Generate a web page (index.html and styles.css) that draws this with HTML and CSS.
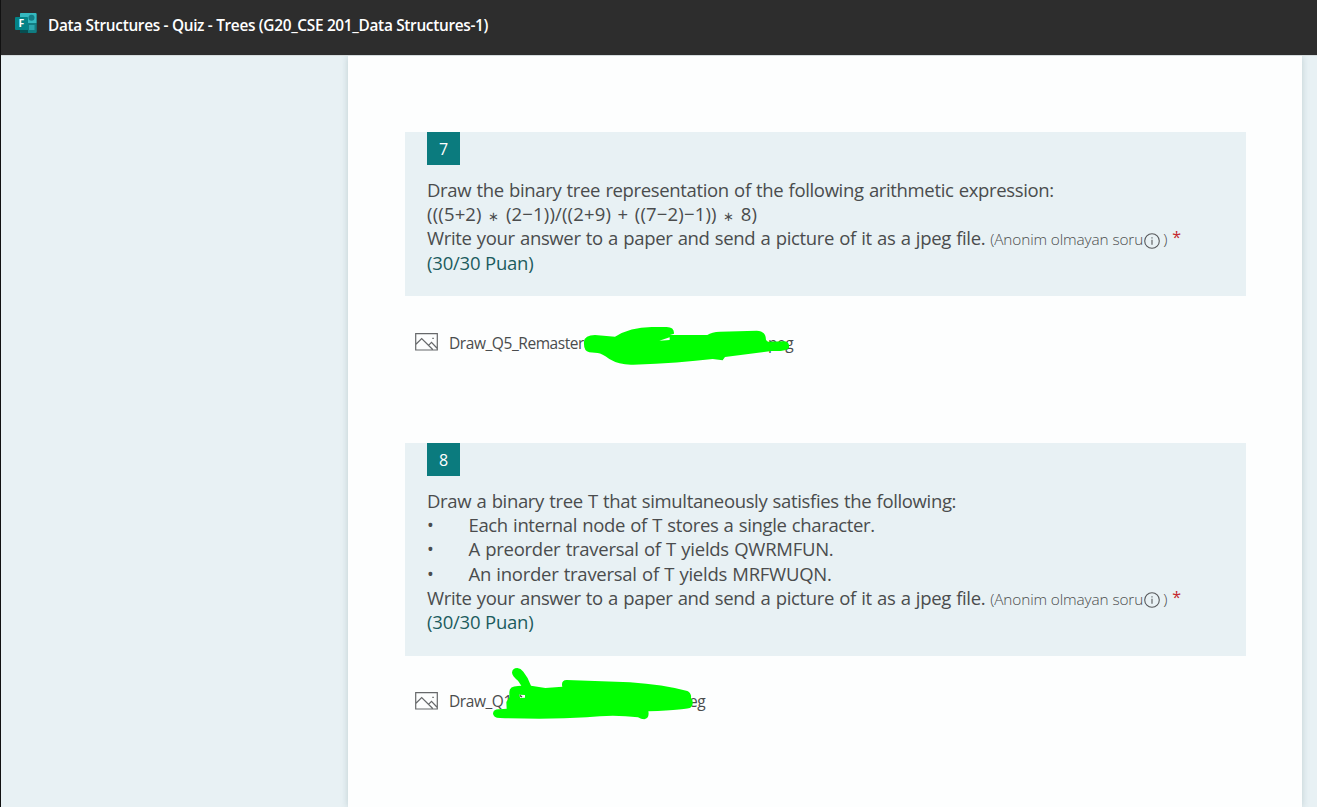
FILE: index.html
```html
<!DOCTYPE html>
<html lang="tr">
<head>
<meta charset="utf-8">
<title>Data Structures - Quiz - Trees</title>
<link rel="stylesheet" href="styles.css">
</head>
<body>
<header class="topbar">
  <svg class="logo" width="22" height="21" viewBox="0 0 22 21">
    <rect x="5" y="0" width="16.500" height="20" rx="1.200" fill="#0a7c80"/>
    <path d="M6 0h14.500q1 0 1 1v9h-16.500v-9q0-1 1-1z" fill="#35b9c0"/>
    <rect x="13" y="10" width="8.500" height="9.500" fill="#127c82"/>
    <circle cx="16.500" cy="4.800" r="3" fill="#137d86"/>
    <rect x="14" y="12" width="5.500" height="5" fill="#2ba5ad"/>
    <path d="M5 17h8v3h-7q-1 0-1-1z" fill="#064d50"/>
    <rect x="0" y="4" width="13" height="13" rx="1" fill="#038387"/>
    <text class="logo-letter" x="3.400" y="14">F</text>
  </svg>
  <h1 class="title">Data Structures - Quiz - Trees (G20_CSE 201_Data Structures-1)</h1>
</header>
<main class="page">
  <div class="card">
    <section class="question">
      <div class="number">7</div>
      <div class="line"><span class="intro">Draw the binary tree representation of the following arithmetic expression:</span></div>
      <div class="line"><span class="formula">(((5+2) <span class="ast">∗</span> (2−1))/((2+9) + ((7−2)−1)) <span class="ast">∗</span> 8)</span></div>
      <div class="line"><span class="intro">Write your answer to a paper and send a picture of it as a jpeg file.</span><span class="note">(Anonim olmayan soru</span><svg class="info" width="16" height="16" viewBox="0 0 16 16"><circle cx="8" cy="8" r="7.300"/><path d="M8 6.700v5M8 4.200v1.300"/></svg><span class="close">)</span><span class="req">*</span></div>
      <div class="line points">(30/30 Puan)</div>
    </section>
    <div class="file">
      <svg class="pic" width="23" height="18" viewBox="0 0 23 18"><path d="M.7.700h21.600v16.300H.7zM.7 11.500l6-6 11 11M13.500 12.300l3-3 5.800 6.200"/><path d="M17.300 5.300h1.500"/></svg>
      <span class="fname">Draw_Q5_Remaster</span><span class="tail t1">peg</span>
      <svg class="scribble s1" width="240" height="60" viewBox="0 0 720 180"><path d="M42 80Q44 60 75 60L135 65Q180 37 245 36H290Q313 36 312 56L300 60L412 60Q425 51 450 50L560 47Q588 48 588 75L594 80L645 79Q659 82 657 98Q650 110 605 108L465 126L458 136L428 132Q330 144 190 149Q150 151 118 132Q96 116 83 114L58 112Q40 108 42 80ZM268 77L299 75V67Z"/></svg>
    </div>
    <section class="question second">
      <div class="number">8</div>
      <div class="line"><span class="intro">Draw a binary tree T that simultaneously satisfies the following:</span></div>
      <div class="line"><span class="bullet">•</span><span class="item">Each internal node of T stores a single character.</span></div>
      <div class="line"><span class="bullet">•</span><span class="item caps">A preorder traversal of T yields QWRMFUN.</span></div>
      <div class="line"><span class="bullet">•</span><span class="item caps">An inorder traversal of T yields MRFWUQN.</span></div>
      <div class="line"><span class="intro">Write your answer to a paper and send a picture of it as a jpeg file.</span><span class="note">(Anonim olmayan soru</span><svg class="info" width="16" height="16" viewBox="0 0 16 16"><circle cx="8" cy="8" r="7.300"/><path d="M8 6.700v5M8 4.200v1.300"/></svg><span class="close">)</span><span class="req">*</span></div>
      <div class="line points">(30/30 Puan)</div>
    </section>
    <div class="file last">
      <svg class="pic" width="23" height="18" viewBox="0 0 23 18"><path d="M.7.700h21.600v16.300H.7zM.7 11.500l6-6 11 11M13.500 12.300l3-3 5.800 6.200"/><path d="M17.300 5.300h1.500"/></svg>
      <span class="fname">Draw_Q1</span><span class="tail t2">eg</span>
      <svg class="scribble s2" width="320" height="70" viewBox="0 0 960 210"><path d="M336 38Q337 24 352 24Q362 25 370 35Q385 53 393 77L436 84L487 80Q482 61 500 60L690 67Q790 74 862 93Q875 100 873 113Q884 128 873 142Q865 150 745 154Q749 174 733 178Q723 178 714 172Q640 162 560 172Q450 179 300 174Q279 174 279 160Q281 146 300 148L320 146L319 126L328 112L328 96Q328 78 354 78L364 77L354 62Q337 48 336 38ZM357 104L361 114L375 113V105Z"/><path class="mark" d="M359 106l7 5"/></svg>
    </div>
  </div>
</main>
</body>
</html>
```
FILE: styles.css
```css
* { box-sizing: border-box; }
body {
  margin: 0;
  height: 807px;
  overflow: hidden;
  display: flex;
  flex-direction: column;
  font-family: "Open Sans", "Noto Sans", sans-serif;
  color: #4a4c4d;
  background: #e8f1f4;
  border-left: 1px solid #111;
}
.topbar {
  height: 55px;
  flex: none;
  display: flex;
  align-items: flex-start;
  padding: 13px 0 0 14px;
  background: #2d2d2d;
}
.logo { flex: none; }
.logo-letter { font: 700 10.5px "Open Sans", sans-serif; fill: #fff; }
.title {
  margin: 1px 0 0 11px;
  font-size: 15.4px;
  line-height: 23px;
  font-weight: 600;
  letter-spacing: -0.32px;
  white-space: nowrap;
  color: #fff;
}
.page {
  flex: 1;
  display: flex;
  padding-left: 347px;
  border-top: 1px solid #d5dcde;
}
.card {
  width: 954px;
  padding: 76px 56px 0 57px;
  background: #fdfefe;
  box-shadow: 0 0 7px rgba(40, 80, 90, 0.22);
  clip-path: inset(0 -12px);
}
.question { height: 164px; width: 841px; padding-left: 22px; background: #e8f1f4; }
.second { height: 213px; margin-top: 78px; }
.number {
  width: 33px;
  height: 33px;
  margin-bottom: 12.8px;
  font-size: 16px;
  line-height: 35px;
  text-align: center;
  color: #fff;
  background: #0b7b7e;
}
.line {
  display: flex;
  height: 24.3px;
  line-height: 24.3px;
  font-size: 18.5px;
  white-space: nowrap;
}
.intro { letter-spacing: -0.35px; word-spacing: 0.8px; }
.formula { letter-spacing: 0.17px; word-spacing: 1.5px; }
.ast { font-size: 13px; line-height: 1; }
.item { letter-spacing: -0.36px; word-spacing: 0.8px; }
.caps { letter-spacing: -0.27px; }
.bullet { width: 41.5px; font-size: 18px; }
.note { margin-left: 5px; font-size: 15.4px; font-weight: 300; line-height: 27px; letter-spacing: -0.13px; }
.close { margin-left: 3px; font-size: 15.4px; font-weight: 300; line-height: 27px; }
.info { margin: 6.5px 0 0 1px; fill: none; stroke: #56585a; stroke-width: 1.1; }
.req { margin-left: 5px; font-size: 16px; line-height: 23px; color: #c4282d; }
.points { letter-spacing: -0.2px; color: #1c5c5e; }
.file {
  position: relative;
  display: flex;
  height: 69px;
  padding: 36px 0 0 10px;
  font-size: 15.5px;
  line-height: 22px;
}
.pic { flex: none; margin-top: 1px; fill: none; stroke: #66686a; stroke-width: 1.2; }
.fname { margin-left: 11px; letter-spacing: -0.43px; }
.tail { position: absolute; top: 36px; letter-spacing: -0.43px; }
.t1 { left: 363px; }
.t2 { left: 284px; }
.last { padding-top: 35px; line-height: 21px; }
.last .tail { top: 35px; }
.scribble { position: absolute; fill: #00ff00; fill-rule: evenodd; }
.s1 { left: 165px; top: 19px; }
.s2 { left: -5px; top: 4px; }
.mark { fill: none; stroke: #444; stroke-width: 4; }
```
